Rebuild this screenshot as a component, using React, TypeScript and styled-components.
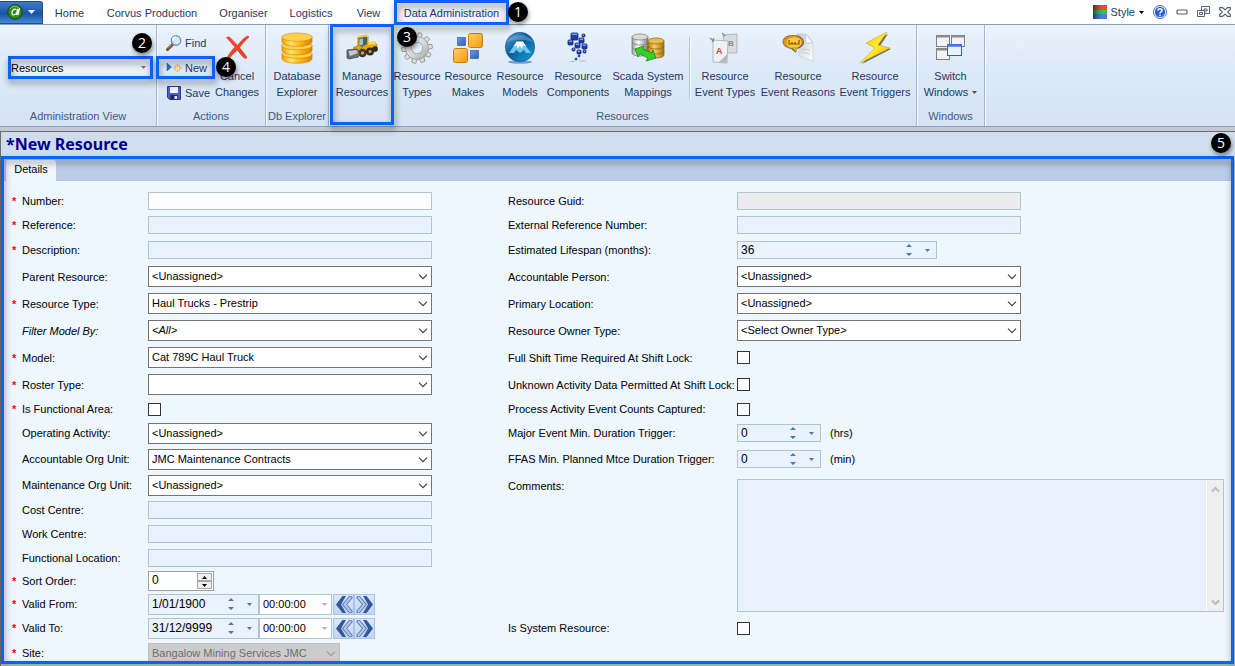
import React from 'react';
import styled, { createGlobalStyle, css } from 'styled-components';

const GlobalStyle = createGlobalStyle`
  *, *::before, *::after { box-sizing: border-box; }
  body { margin: 0; background: #c3c9d2; }
  body, button, input, select, textarea {
    font-family: "Liberation Sans", Arial, sans-serif;
    font-size: 11px;
  }
`;

const ink = '#1f3763';
const blue = '#0a62fb';

/* ---------- shared ---------- */

const Shell = styled.div`
  display: flex;
  flex-direction: column;
  height: 100vh;
  overflow: hidden;
`;

const Highlight = styled.span<{ $top?: number; $right?: number; $bottom?: number; $left?: number }>`
  position: absolute;
  z-index: 2;
  top: ${p => p.$top ?? 0}px;
  right: ${p => p.$right ?? 0}px;
  bottom: ${p => p.$bottom ?? 0}px;
  left: ${p => p.$left ?? 0}px;
  border: 3px solid ${blue};
  filter: drop-shadow(1px 4px 3px rgba(0, 0, 0, 0.45));
  pointer-events: none;
`;

const Badge = styled.span<{ $top: number; $right: number }>`
  position: absolute;
  z-index: 3;
  top: ${p => p.$top}px;
  right: ${p => p.$right}px;
  width: 20px;
  height: 20px;
  border-radius: 50%;
  background: #000;
  color: #fff;
  font: 14px/20px "Open Sans", sans-serif;
  text-align: center;
  box-shadow: 1px 3px 4px rgba(0, 0, 0, 0.4);
`;

/* ---------- title bar ---------- */

const TitleBar = styled.header`
  display: flex;
  align-items: center;
  flex: none;
  height: 25px;
  background: #fff;
  border-bottom: 1px solid #8aa0bd;
`;

const AppMenu = styled.button`
  display: flex;
  align-items: center;
  gap: 4px;
  width: 43px;
  height: 23px;
  padding: 0 0 0 7px;
  border: 1px solid #1d4b8f;
  border-left: 0;
  border-radius: 0 3px 0 0;
  background: linear-gradient(#3f7cc4, #1f58a8 50%, #1a4f9e 52%, #3f8ad8);
`;

const Tabs = styled.nav`
  display: flex;
  flex: 1;
  height: 24px;
`;

const RibbonTab = styled.button<{ $w: number; $active?: boolean }>`
  position: relative;
  width: ${p => p.$w}px;
  padding: 2px 0 0;
  border: 0;
  background: ${p => (p.$active ? '#f1f6fc' : 'none')};
  color: ${ink};
  white-space: nowrap;
`;

const WindowTools = styled.div`
  display: flex;
  align-items: center;
  padding-right: 4px;
  gap: 9px;
`;

const ToolButton = styled.button`
  display: flex;
  align-items: center;
  gap: 4px;
  padding: 0;
  border: 0;
  background: none;
  color: ${ink};
`;

/* ---------- ribbon ---------- */

const Ribbon = styled.div`
  display: flex;
  flex: none;
  height: 102px;
  border-bottom: 1px solid #8aa3c8;
  background: linear-gradient(#eaf3fd, #dce9f7 45%, #d7e3f2);
`;

const Group = styled.section<{ $w: number }>`
  display: flex;
  flex-direction: column;
  width: ${p => p.$w}px;
  border-right: 1px solid #a3b7d3;
  box-shadow: 1px 0 0 #f5f9fe;
`;

const GroupBody = styled.div<{ $pad?: number }>`
  display: flex;
  flex: none;
  height: 80px;
  padding: 0 ${p => p.$pad ?? 0}px;
`;

const GroupName = styled.h2`
  margin: 0;
  font-size: 11px;
  font-weight: 400;
  line-height: 22px;
  text-align: center;
  white-space: nowrap;
  color: #3c5a85;
`;

const BigButton = styled.button<{ $w: number }>`
  position: relative;
  display: flex;
  flex-direction: column;
  align-items: center;
  flex: none;
  width: ${p => p.$w}px;
  padding: 7px 0 0;
  border: 0;
  background: none;
  color: ${ink};
  line-height: 16px;
  white-space: nowrap;
`;

const BigIcon = styled.span`
  display: block;
  height: 32px;
  margin-bottom: 4px;
  svg { display: block; }
`;

const Caption = styled.span`
  display: flex;
  align-items: center;
  gap: 4px;
`;

const ViewPicker = styled.div`
  position: relative;
  width: 140px;
  height: 17px;
  margin: 34px 0 0 11px;
`;

const ViewSelect = styled.select`
  appearance: none;
  width: 100%;
  height: 100%;
  padding: 0;
  border: 0;
  background: #eaf0f8;
  color: #000;
`;

const PickerArrow = styled.svg`
  position: absolute;
  right: 5px;
  top: 7px;
  pointer-events: none;
`;

const SmallStack = styled.div`
  display: flex;
  flex-direction: column;
  width: 56px;
  padding-top: 5px;
`;

const SmallButton = styled.button`
  position: relative;
  display: flex;
  align-items: center;
  gap: 3px;
  height: 25px;
  padding: 0 0 0 5px;
  border: 0;
  background: none;
  color: ${ink};
`;

const Separator = styled.span`
  width: 1px;
  height: 62px;
  margin: 12px 3px 0;
  background: #b4c6de;
  box-shadow: 1px 0 0 #f5f9fe;
`;

/* ---------- workspace ---------- */

const Workspace = styled.main`
  display: flex;
  flex-direction: column;
  flex: 1;
  min-height: 0;
  margin-top: 4px;
  padding: 0 1px 2px 0;
  border-top: 1px solid #6d6d6d;
  border-left: 1px solid #6d6d6d;
`;

const PageTitle = styled.h1`
  flex: none;
  margin: 0 -1px 0 0;
  height: 24px;
  padding-left: 5px;
  background: #d0ddee;
  color: #00008b;
  font: bold 16px/24px "Noto Sans", "Open Sans", sans-serif;
`;

const DetailsPanel = styled.div`
  position: relative;
  display: flex;
  flex: 1;
  min-height: 0;
  padding: 3px;
  background: #eef6fe;
`;

const PanelClip = styled.div`
  flex: 1;
  min-width: 0;
  overflow: hidden;
`;

const TabStrip = styled.div`
  display: flex;
  height: 22px;
  padding: 1px 0 0 2px;
  background: #bbcde6;
  border-bottom: 1px solid #b3c7e0;
`;

const DetailsTab = styled.button`
  width: 50px;
  height: 21px;
  padding: 0 0 4px;
  border: 0;
  border-radius: 3px 3px 0 0;
  background: linear-gradient(#f7faff, #eef6fe);
  color: #000;
`;

const Form = styled.form`
  display: grid;
  grid-template-columns: minmax(430px, 496px) minmax(0, 1fr);
  padding: 8px 7px 0 8px;
`;

const Row = styled.div<{ $h: number }>`
  display: flex;
  align-items: center;
  height: ${p => p.$h}px;
`;

const Star = styled.span`
  width: 10px;
  color: #f00;
  font-weight: 700;
`;

const Label = styled.label<{ $wide?: boolean; $italic?: boolean }>`
  flex: none;
  width: ${p => (p.$wide ? 229 : 126)}px;
  font-style: ${p => (p.$italic ? 'italic' : 'normal')};
  white-space: nowrap;
  color: #000;
`;

const TextBox = styled.input<{ $tone?: 'white' | 'grey' }>`
  width: 284px;
  height: 18px;
  padding: 0 3px;
  border: 1px solid #afc6d1;
  background: ${p => (p.$tone === 'white' ? '#fdfdff' : p.$tone === 'grey' ? '#ececee' : '#e9f0fe')};
`;

const SelectWrap = styled.div<{ $w?: number }>`
  position: relative;
  width: ${p => p.$w ?? 284}px;
  height: 21px;
  svg { position: absolute; right: 4px; top: 8px; pointer-events: none; }
`;

const SelectBox = styled.select<{ $italic?: boolean }>`
  appearance: none;
  width: 100%;
  height: 21px;
  padding: 0 20px 1px 3px;
  border: 1px solid #747474;
  border-radius: 0;
  background: #fff;
  color: #000;
  font-style: ${p => (p.$italic ? 'italic' : 'normal')};
  &:disabled { background: #ccc; border-color: #bfbfbf; color: #6d6d6d; opacity: 1; }
`;

const CheckBox = styled.input`
  appearance: none;
  width: 13px;
  height: 13px;
  margin: 0;
  border: 1px solid #333;
  background: #fff;
`;

const field = css`
  display: flex;
  align-items: center;
  border: 1px solid #afc6d1;
  background: #e9f0fe;
`;

const Stepper = styled.div<{ $w: number; $tall?: boolean; $white?: boolean }>`
  ${field}
  width: ${p => p.$w}px;
  height: ${p => (p.$tall ? 21 : 18)}px;
  padding-right: ${p => (p.$white ? 2 : 0)}px;
  background: ${p => (p.$white ? '#fff' : '#e9f2fd')};
`;

const StepperInput = styled.input<{ $small?: boolean }>`
  flex: 1;
  min-width: 0;
  height: 16px;
  padding: 0 0 0 3px;
  border: 0;
  background: none;
  color: #000;
  font-size: ${p => (p.$small ? 11 : 12)}px;
`;

const StepButton = styled.button`
  display: flex;
  justify-content: center;
  width: 18px;
  padding: 0;
  border: 0;
  background: none;
`;

const TimeDrop = styled(StepButton)`
  width: 10px;
`;

const ClassicSpin = styled.div`
  display: flex;
  width: 66px;
  height: 20px;
  border: 1px solid #9aa0a6;
  background: #fff;
`;

const ClassicButtons = styled.div`
  display: flex;
  flex-direction: column;
  width: 16px;
  padding: 1px 1px 1px 0;
  button {
    display: flex;
    flex: 1;
    align-items: center;
    justify-content: center;
    padding: 0;
    border: 1px solid #a8a8a8;
    background: #efefef;
  }
`;

const JumpButtons = styled.div`
  display: flex;
  margin-left: 1px;
`;

const JumpButton = styled.button`
  display: flex;
  align-items: center;
  justify-content: center;
  width: 21px;
  height: 21px;
  padding: 0;
  border: 1px solid #a9c3e6;
  background: linear-gradient(#dbe8f8, #c0d5f0);
`;

const Unit = styled.span`
  margin-left: 9px;
`;

const CommentsRow = styled.div`
  display: flex;
  padding: 7px 0 4px;
  label { line-height: 14px; }
`;

const CommentsBox = styled.div`
  display: flex;
  flex: 1;
  min-width: 0;
  height: 133px;
  border: 1px solid #afc6d1;
  background: #e9f0fe;
  textarea {
    flex: 1;
    min-width: 0;
    padding: 2px;
    border: 0;
    background: none;
    resize: none;
    overflow: hidden;
  }
`;

const ScrollTrack = styled.div`
  display: flex;
  flex-direction: column;
  align-items: center;
  justify-content: space-between;
  width: 17px;
  padding: 6px 0 5px;
  border-left: 1px solid #fff;
  background: #efefef;
`;

/* ---------- small glyphs ---------- */

const Chevron = ({ color = '#444' }: { color?: string }) => (
  <svg width="10" height="6" viewBox="0 0 10 6"><path d="M1 .7l4 4 4-4" fill="none" stroke={color} strokeWidth="1.2" /></svg>
);
const ScrollArrow = ({ up }: { up?: boolean }) => (
  <svg width="9" height="7" viewBox="0 0 9 7"><path d={up ? 'M1 5.500L4.500 2 8 5.500' : 'M1 1.500L4.500 5 8 1.500'} fill="none" stroke="#bdbdbd" strokeWidth="2.200" /></svg>
);
const Down = ({ color = '#4a78b0' }: { color?: string }) => (
  <svg width="5" height="3" viewBox="0 0 5 3"><path d="M0 0h5L2.500 3z" fill={color} /></svg>
);
const UpDown = () => (
  <svg width="6" height="12" viewBox="0 0 6 12"><path d="M0 3h6L3 0zM0 9h6L3 12z" fill="#4a78b0" /></svg>
);
const Double = ({ right }: { right?: boolean }) => (
  <svg width="18" height="17" viewBox="0 0 18 17">
    <g transform={right ? 'matrix(-1 0 0 1 18 0)' : undefined} fill="none">
      <path d="M15.500 1.500L9.500 8.500l6 7" stroke="#5d7db5" strokeWidth="4" strokeLinecap="round" />
      <path d="M15.500 1.500L9.500 8.500l6 7" stroke="#b4c9e8" strokeWidth="2" strokeLinecap="round" />
      <path d="M7.500 0H11L6 8.500 11 17H7.500L1 8.500z" fill="#34589b" />
    </g>
  </svg>
);

/* ---------- icons ---------- */

const Logo = () => (
  <svg width="16" height="16" viewBox="0 0 16 16">
    <circle cx="8" cy="8" r="7.500" fill="#2f8a1f" /><circle cx="8" cy="8" r="7.200" fill="none" stroke="#12430c" />
    <path d="M3 5a5.500 5.500 0 0 1 9-1" stroke="#8fd06a" fill="none" />
    <path d="M9.500 5.500C7 4 4.500 7 5 9.500s3 1.500 4.500-.500L11 5l-1.500 6M12.500 4L11 11" stroke="#fff" strokeWidth="1.200" fill="none" />
  </svg>
);
const StyleIcon = () => (
  <svg width="14" height="14" viewBox="0 0 14 14">
    <defs><linearGradient id="sh"><stop stopColor="#000" stopOpacity=".5" /><stop offset="1" stopColor="#fff" stopOpacity=".1" /></linearGradient></defs>
    <path fill="#e63323" d="M0 0h14v5H0z" /><path fill="#1ac023" d="M0 5h14v4H0z" /><path fill="#2d6df0" d="M0 9h14v5H0z" /><path fill="url(#sh)" d="M0 0h14v14H0z" />
  </svg>
);
const HelpIcon = () => (
  <svg width="14" height="14" viewBox="0 0 14 14">
    <circle cx="7" cy="7" r="6.500" fill="#fff" stroke="#3f6fcb" /><circle cx="7" cy="7" r="5.200" fill="#2a62d6" />
    <path d="M5 5.500C5 3.200 9 3.200 9 5.400 9 6.800 7 6.700 7 8.500M7 9.800v1.400" stroke="#fff" strokeWidth="1.500" fill="none" />
  </svg>
);
const MinIcon = () => <svg width="12" height="6" viewBox="0 0 12 6"><rect x="1" y="1" width="10" height="4" rx="1" fill="#fff" stroke="#54616f" strokeWidth="1.200" /></svg>;
const RestoreIcon = () => (
  <svg width="13" height="12" viewBox="0 0 13 12" fill="#fff" stroke="#54616f">
    <path d="M4.500.5h8v7h-8z" /><path d="M7 3h3v2H7z" /><path d="M.5 4.500h7v6h-7z" /><path d="M2.500 6.500h3v2h-3z" />
  </svg>
);
const CloseIcon = () => (
  <svg width="12" height="10" viewBox="0 0 12 10"><path d="M.6.6h3L6 3 8.400.6h3v1.800L8.500 5l2.900 2.600v1.800h-3L6 7 3.600 9.400h-3V7.600L3.500 5 .6 2.400z" fill="#fff" stroke="#54616f" strokeWidth="1.100" /></svg>
);
const FindIcon = () => (
  <svg width="16" height="16" viewBox="0 0 16 16">
    <path d="M6.500 9.500L1.500 14.500" stroke="#6b4a2e" strokeWidth="3" strokeLinecap="round" /><path d="M6 9.500L2 13.500" stroke="#d9a066" />
    <circle cx="10" cy="5.500" r="4.700" fill="#cfeafc" stroke="#7b8ea6" strokeWidth="1.400" /><path d="M7 5a3 3 0 0 1 3-3" stroke="#fff" strokeWidth="1.500" fill="none" />
  </svg>
);
const NewIcon = () => (
  <svg width="16" height="16" viewBox="0 0 16 16">
    <path d="M1 3l4.500 4L1 11z" fill="#2f6bd0" stroke="#2350a0" strokeWidth=".5" />
    <path d="M11.500 4v8M7.500 8h8M9 5.500l5 5M14 5.500l-5 5" stroke="#f0b429" strokeWidth="1.400" strokeDasharray="2 1" /><circle cx="11.500" cy="8" r="1.800" fill="#ffe57a" />
  </svg>
);
const SaveIcon = () => (
  <svg width="16" height="16" viewBox="0 0 16 16">
    <path d="M1.500 1.500h13v13h-11l-2-2z" fill="#4a5fc6" stroke="#2b3a8c" /><path d="M4 2h8v6H4z" fill="#eef2fb" /><path d="M4.500 10h7v4.500h-7z" fill="#20264f" /><path d="M8.500 11H11v3H8.500z" fill="#e6e9f5" />
  </svg>
);
const CancelIcon = () => (
  <svg width="32" height="32" viewBox="0 0 32 32"><path d="M5.500 5.500C8 4 9 5 16.500 13.500 21 8 24 5 27 4l1 1c-3 2.500-6 6-9.500 10.500 3 4 6 7 7.500 10l-2 1c-3-2-5-5-7.500-8.500C12 21.500 9 25.500 7 28l-2-1c2.500-4 5.500-8.500 9-12C11 11.500 8 8.500 5.500 5.500z" fill="#ee4527" stroke="#d42f16" strokeWidth=".6" /></svg>
);
const DbIcon = () => (
  <svg width="32" height="32" viewBox="0 0 34 34">
    <defs><linearGradient id="db"><stop stopColor="#f39a05" /><stop offset=".3" stopColor="#ffe66b" /><stop offset=".6" stopColor="#fbb710" /><stop offset="1" stopColor="#e07f00" /></linearGradient></defs>
    {[23, 14, 5].map(y => (
      <g key={y}><path d={`M1 ${y}v5c0 7 32 7 32 0v-5z`} fill="url(#db)" stroke="#c87500" strokeWidth=".6" /><ellipse cx="17" cy={y + 0.5} rx="16" ry="4.400" fill="#ffd34f" stroke="#e08a05" strokeWidth=".7" /></g>
    ))}
  </svg>
);
const LoaderIcon = () => (
  <svg width="32" height="32" viewBox="0 0 32 32">
    <path d="M16 12l13-2 2 3v6l-8 2-8-2z" fill="#eba911" stroke="#8f6407" strokeWidth=".6" /><path d="M21 10l8-1 1 3-9 1z" fill="#ffd75a" />
    <path d="M12 5.500l8.500-1.500 1.500 1-.5 8-9.500 3.500z" fill="#49606c" stroke="#e0a20e" strokeWidth="1.400" /><path d="M13.500 7l3.500-.5v6l-4 1.500z" fill="#9fc3d6" /><path d="M12 5l8-1.600 2 1.600" stroke="#ffcf3f" strokeWidth="1.500" fill="none" />
    <circle cx="29" cy="17" r="2.800" fill="#2e2c29" /><circle cx="24" cy="19.500" r="4" fill="#2e2c29" /><circle cx="24" cy="19.500" r="1.500" fill="#d8a51d" />
    <circle cx="16.500" cy="21" r="4.200" fill="#383633" /><circle cx="16.500" cy="21" r="1.700" fill="#d8a51d" />
    <path d="M7 16l6-3 4 2-5 4z" fill="#e5a512" stroke="#8f6407" strokeWidth=".6" />
    <path d="M1 18l10-1 3 5-2 3-9 2-2-1z" fill="#697078" stroke="#3d434a" strokeWidth=".8" /><path d="M2.500 19l8-1 1.500 3-8 3z" fill="#c3c9ce" />
  </svg>
);
const GearIcon = () => (
  <svg width="32" height="32" viewBox="0 0 32 32">
    <defs><linearGradient id="gr" x2="1" y2="1"><stop stopColor="#fff" /><stop offset=".6" stopColor="#d4d4d4" /><stop offset="1" stopColor="#b0b0b0" /></linearGradient></defs>
    {[0, 36, 72, 108, 144, 180, 216, 252, 288, 324].map(a => (
      <path key={a} d="M13.200 6l1-5.300h3.600l1 5.300z" transform={`rotate(${a + 12} 16 16)`} fill="#dedede" stroke="#8f8f8f" strokeWidth=".8" />
    ))}
    <circle cx="16" cy="16" r="8.500" fill="none" stroke="#8f8f8f" strokeWidth="6.200" /><circle cx="16" cy="16" r="8.500" fill="none" stroke="url(#gr)" strokeWidth="5.200" />
  </svg>
);
const MakesIcon = () => (
  <svg width="32" height="32" viewBox="0 0 32 32">
    <defs><linearGradient id="mo" y2="1"><stop stopColor="#ffd061" /><stop offset="1" stopColor="#f09a11" /></linearGradient><linearGradient id="mb" y2="1"><stop stopColor="#6d9be0" /><stop offset="1" stopColor="#2c5eb8" /></linearGradient></defs>
    <rect x="16.500" y="1.500" width="14" height="14" rx="2" fill="url(#mo)" stroke="#cc7d08" /><rect x="1.500" y="16.500" width="14" height="14" rx="2" fill="url(#mo)" stroke="#cc7d08" />
    <rect x="5.500" y="5.500" width="8" height="8" fill="url(#mb)" stroke="#2550a0" strokeWidth=".6" /><rect x="18.500" y="18.500" width="8" height="8" fill="url(#mb)" stroke="#2550a0" strokeWidth=".6" />
  </svg>
);
const ModelsIcon = () => (
  <svg width="32" height="32" viewBox="0 0 32 32">
    <defs><linearGradient id="ml" y2="1"><stop stopColor="#5aa6d6" /><stop offset=".45" stopColor="#0d5a9c" /><stop offset="1" stopColor="#1ba4de" /></linearGradient></defs>
    <ellipse cx="16" cy="30" rx="12" ry="1.800" fill="#4c7fb2" opacity=".7" /><circle cx="16" cy="15" r="14.700" fill="url(#ml)" stroke="#0b4f8a" strokeWidth=".6" />
    <path d="M3 10C7 1 25 1 29 10c-7-3-19-3-26 0z" fill="#fff" opacity=".22" />
    <path d="M12 10h7l8 11h-5l-2-3-4 3-4-3-2 3H5z" fill="#6cc7ea" /><path d="M12.500 9.500h6.500l3 5-3-1-1 3-2-2.500-3 2.500v-3l-3 1z" fill="#fff" />
  </svg>
);
const ComponentsIcon = () => (
  <svg width="32" height="32" viewBox="0 0 32 32">
    {[[5, 2, 7], [16, 3, 3], [13, 7, 5], [2, 9, 5], [9, 12, 5], [16, 13, 5], [6, 17, 3], [11, 19, 4], [17, 19, 3], [12, 24, 2], [9, 27, 2]].map(([x, y, s]) => (
      <g key={`${x}-${y}`} transform="translate(4 -1)"><rect x={x} y={y} width={s} height={s} rx="1" fill="#1c3fae" stroke="#0e2272" strokeWidth=".8" /><path d={`M${x + 0.700} ${y + 1.200}h${s - 1.500}`} stroke="#93b4ff" strokeWidth="1.200" /></g>
    ))}
    <path d="M8 29.500h5M17 29h7" stroke="#b5bdd0" strokeWidth="1.200" />
  </svg>
);
const ScadaIcon = () => (
  <svg width="34" height="32" viewBox="0 0 34 32">
    <defs><linearGradient id="sg"><stop stopColor="#9c9c9c" /><stop offset=".4" stopColor="#fff" /><stop offset="1" stopColor="#7d7d7d" /></linearGradient><linearGradient id="sy"><stop stopColor="#b77c0e" /><stop offset=".4" stopColor="#f6cf6c" /><stop offset="1" stopColor="#a86e08" /></linearGradient></defs>
    <path d="M1 5v16c0 4 16 4 16 0V5z" fill="url(#sg)" stroke="#777" strokeWidth=".7" /><ellipse cx="9" cy="5" rx="8" ry="3" fill="#dcdcdc" stroke="#777" strokeWidth=".7" /><path d="M1 10c0 4 16 4 16 0M1 15c0 4 16 4 16 0" stroke="#777" fill="none" strokeWidth=".7" />
    <path d="M17 9v14c0 4 16 4 16 0V9z" fill="url(#sy)" stroke="#8f6209" strokeWidth=".7" /><ellipse cx="25" cy="9" rx="8" ry="3" fill="#e8bc50" stroke="#8f6209" strokeWidth=".7" /><path d="M17 14c0 4 16 4 16 0M17 19c0 4 16 4 16 0" stroke="#8f6209" fill="none" strokeWidth=".7" />
    <path d="M4 17l9-3-1 3 9 4 1-3 3 8-10 3 2-3-8-4-2 3z" fill="#37cf27" stroke="#158a0d" strokeWidth=".8" />
  </svg>
);
const EventTypesIcon = () => (
  <svg width="32" height="32" viewBox="0 0 32 32">
    <path d="M14 3l14-1v19H17z" fill="#d9dde0" stroke="#9aa0a6" strokeWidth=".7" /><text x="19" y="14" fontSize="8" fontWeight="700" fill="#4caf78" fontFamily="Liberation Sans, sans-serif">B</text>
    <path d="M4 8l15 1-1 22-14-1z" fill="#f0f1f3" stroke="#9aa0a6" strokeWidth=".7" /><path d="M1 6l4 3M3 10l2-4M13 1l3 3" stroke="#888" strokeWidth="1.200" /><path d="M18 22v9l-8-1z" fill="#b5babf" />
    <text x="7" y="22" fontSize="9" fontWeight="700" fill="#ee3344" fontFamily="Liberation Sans, sans-serif">A</text>
  </svg>
);
const EventReasonsIcon = () => (
  <svg width="32" height="32" viewBox="0 0 32 32">
    <defs><linearGradient id="pg" x2="1" y2="1"><stop stopColor="#c4c9cd" /><stop offset="1" stopColor="#fff" /></linearGradient></defs>
    <path d="M15 2l9 0 7 8v19l-14-5z" fill="url(#pg)" stroke="#c3c8cc" strokeWidth=".6" /><path d="M24 2l-1 9 8 0z" fill="#f7f8f9" stroke="#b3b8bd" strokeWidth=".6" /><path d="M19 17l9 1M19 20l9 2" stroke="#c9cdd1" />
    <path d="M11 3c14 0 14 12 4 14l-1 4-5-4C-3 15-2 3 11 3z" fill="#6f6f6f" /><ellipse cx="11" cy="10" rx="9.500" ry="6.300" fill="#e8950b" /><ellipse cx="12" cy="10.500" rx="7.500" ry="5.200" fill="#ffc93d" />
    <path d="M10 15h5l-1 5z" fill="#f3a713" /><path d="M7 8v4h10V8M10 12v-2M13 12v-2" stroke="#7a5200" strokeWidth="1.200" fill="none" />
  </svg>
);
const BoltIcon = () => (
  <svg width="32" height="32" viewBox="0 0 32 32">
    <defs><linearGradient id="bo" y2="1"><stop stopColor="#f2b70b" /><stop offset=".5" stopColor="#ffee2e" /><stop offset="1" stopColor="#e9a308" /></linearGradient></defs>
    <path d="M29 2L9 12l8 4L3 32l29-15-11-3z" fill="#444" opacity=".75" /><path d="M28 0L7 11l9 5L1 31l30-15-12-3z" fill="url(#bo)" stroke="#d29208" strokeWidth=".5" />
  </svg>
);
const WindowsIcon = () => (
  <svg width="32" height="32" viewBox="0 0 32 32">
    {[[1.5, 3.5], [16.5, 3.5], [1.5, 16.5]].map(([x, y]) => (
      <g key={`${x}-${y}`}><rect x={x} y={y} width="13" height="11" fill="#f3f3f3" stroke="#7e7e7e" /><path d={`M${x} ${y + 1}h13`} stroke="#8c8c8c" strokeWidth="2" /></g>
    ))}
    <rect x="12.500" y="12.500" width="14" height="11" fill="#eaf2ff" stroke="#3a5db0" /><path d="M12.500 13.500h14" stroke="#3f78e6" strokeWidth="2.500" />
  </svg>
);

/* ---------- form pieces ---------- */

type LabelProps = { id: string; text: string; req?: boolean; wide?: boolean; italic?: boolean };

const FieldLabel = ({ id, text, req, wide, italic }: LabelProps) => (
  <>
    {!wide && <Star>{req ? '*' : ''}</Star>}
    <Label htmlFor={id} $wide={wide} $italic={italic}>{text}</Label>
  </>
);

const TextRow = ({ h = 24, tone, ...l }: LabelProps & { h?: number; tone?: 'white' | 'grey' }) => (
  <Row $h={h}><FieldLabel {...l} /><TextBox id={l.id} $tone={tone} readOnly={tone === 'grey'} /></Row>
);

const SelectRow = ({ h = 27, value, w, disabled, ...l }: LabelProps & { h?: number; value: string; w?: number; disabled?: boolean }) => (
  <Row $h={h}>
    <FieldLabel {...l} />
    <SelectWrap $w={w}>
      <SelectBox id={l.id} $italic={l.italic} disabled={disabled}><option>{value}</option></SelectBox>
      <Chevron color={disabled ? '#999' : '#444'} />
    </SelectWrap>
  </Row>
);

const CheckRow = ({ h, ...l }: LabelProps & { h: number }) => (
  <Row $h={h}><FieldLabel {...l} /><CheckBox id={l.id} type="checkbox" /></Row>
);

const StepRow = ({ value, w, unit, ...l }: LabelProps & { value: string; w: number; unit?: string }) => (
  <Row $h={26}>
    <FieldLabel {...l} />
    <Stepper $w={w}>
      <StepperInput id={l.id} defaultValue={value} />
      <StepButton type="button" aria-label="Step"><UpDown /></StepButton>
      <StepButton type="button" aria-label="Open"><Down /></StepButton>
    </Stepper>
    {unit && <Unit>{unit}</Unit>}
  </Row>
);

const DateRow = ({ value, ...l }: LabelProps & { value: string }) => (
  <Row $h={24}>
    <FieldLabel {...l} />
    <Stepper $w={111} $tall>
      <StepperInput id={l.id} defaultValue={value} />
      <StepButton type="button" aria-label="Step"><UpDown /></StepButton>
      <StepButton type="button" aria-label="Open calendar"><Down /></StepButton>
    </Stepper>
    <Stepper $w={73} $tall $white>
      <StepperInput $small aria-label="Time" defaultValue="00:00:00" />
      <TimeDrop type="button" aria-label="Open time"><Down color="#aaa" /></TimeDrop>
    </Stepper>
    <JumpButtons>
      <JumpButton type="button" aria-label="Back"><Double /></JumpButton>
      <JumpButton type="button" aria-label="Forward"><Double right /></JumpButton>
    </JumpButtons>
  </Row>
);

const Big = ({ icon, a, b, w, children }: { icon: React.ReactNode; a: string; b: React.ReactNode; w: number; children?: React.ReactNode }) => (
  <BigButton type="button" $w={w}><BigIcon>{icon}</BigIcon><Caption>{a}</Caption><Caption>{b}</Caption>{children}</BigButton>
);

export default function App() {
  return (
    <Shell>
      <GlobalStyle />
      <TitleBar>
        <AppMenu type="button" aria-label="Application menu"><Logo /><svg width="9" height="5" viewBox="0 0 9 5"><path d="M1 0h7L4.500 4z" fill="#fff" /></svg></AppMenu>
        <Tabs>
          <RibbonTab $w={53}>Home</RibbonTab>
          <RibbonTab $w={112}>Corvus Production</RibbonTab>
          <RibbonTab $w={71}>Organiser</RibbonTab>
          <RibbonTab $w={64}>Logistics</RibbonTab>
          <RibbonTab $w={51}>View</RibbonTab>
          <RibbonTab $w={115} $active>
            Data Administration
            <Highlight $bottom={-1} />
            <Badge $top={2} $right={-19}>1</Badge>
          </RibbonTab>
        </Tabs>
        <WindowTools>
          <ToolButton type="button"><StyleIcon />Style <Down color="#000" /></ToolButton>
          <ToolButton type="button" aria-label="Help"><HelpIcon /></ToolButton>
          <ToolButton type="button" aria-label="Minimise"><MinIcon /></ToolButton>
          <ToolButton type="button" aria-label="Restore"><RestoreIcon /></ToolButton>
          <ToolButton type="button" aria-label="Close"><CloseIcon /></ToolButton>
        </WindowTools>
      </TitleBar>

      <Ribbon>
        <Group $w={157}>
          <GroupBody>
            <ViewPicker>
              <ViewSelect aria-label="Administration view"><option>Resources</option></ViewSelect>
              <PickerArrow width="5" height="3" viewBox="0 0 5 3"><path d="M0 0h5L2.500 3z" fill="#6b7a8f" /></PickerArrow>
              <Highlight $top={-3} $right={-2} $bottom={-3} $left={-3} />
              <Badge $top={-26} $right={-1}>2</Badge>
            </ViewPicker>
          </GroupBody>
          <GroupName>Administration View</GroupName>
        </Group>
        <Group $w={109}>
          <GroupBody $pad={4}>
            <SmallStack>
              <SmallButton type="button"><FindIcon />Find</SmallButton>
              <SmallButton type="button">
                <NewIcon />New
                <Highlight $top={1} $right={2} $bottom={1} $left={-5} />
                <Badge $top={2} $right={-19}>4</Badge>
              </SmallButton>
              <SmallButton type="button"><SaveIcon />Save</SmallButton>
            </SmallStack>
            <Big icon={<CancelIcon />} a="Cancel" b="Changes" w={40} />
          </GroupBody>
          <GroupName>Actions</GroupName>
        </Group>
        <Group $w={63}>
          <GroupBody><Big icon={<DbIcon />} a="Database" b="Explorer" w={62} /></GroupBody>
          <GroupName>Db Explorer</GroupName>
        </Group>
        <Group $w={588}>
          <GroupBody $pad={3}>
            <Big icon={<LoaderIcon />} a="Manage" b="Resources" w={60}>
              <Highlight $top={-1} $right={-2} $bottom={-20} $left={-2} />
              <Badge $top={2} $right={-25}>3</Badge>
            </Big>
            <Big icon={<GearIcon />} a="Resource" b="Types" w={50} />
            <Big icon={<MakesIcon />} a="Resource" b="Makes" w={52} />
            <Big icon={<ModelsIcon />} a="Resource" b="Models" w={52} />
            <Big icon={<ComponentsIcon />} a="Resource" b="Components" w={64} />
            <Big icon={<ScadaIcon />} a="Scada System" b="Mappings" w={76} />
            <Separator />
            <Big icon={<EventTypesIcon />} a="Resource" b="Event Types" w={64} />
            <Big icon={<EventReasonsIcon />} a="Resource" b="Event Reasons" w={82} />
            <Big icon={<BoltIcon />} a="Resource" b="Event Triggers" w={72} />
          </GroupBody>
          <GroupName>Resources</GroupName>
        </Group>
        <Group $w={68}>
          <GroupBody><Big icon={<WindowsIcon />} a="Switch" b={<>Windows <Down color="#555" /></>} w={67} /></GroupBody>
          <GroupName>Windows</GroupName>
        </Group>
      </Ribbon>

      <Workspace>
        <PageTitle>*New Resource</PageTitle>
        <DetailsPanel>
          <Highlight />
          <Badge $top={-23} $right={3}>5</Badge>
          <PanelClip>
            <TabStrip><DetailsTab type="button">Details</DetailsTab></TabStrip>
            <Form>
              <div>
                <TextRow id="number" text="Number:" req tone="white" />
                <TextRow id="reference" text="Reference:" req />
                <TextRow id="description" text="Description:" req h={26} />
                <SelectRow id="parent" text="Parent Resource:" value="<Unassigned>" />
                <SelectRow id="rtype" text="Resource Type:" req value="Haul Trucks - Prestrip" />
                <SelectRow id="filter" text="Filter Model By:" italic value="<All>" />
                <SelectRow id="model" text="Model:" req value="Cat 789C Haul Truck" />
                <SelectRow id="roster" text="Roster Type:" req value="" />
                <CheckRow id="functional" text="Is Functional Area:" req h={22} />
                <SelectRow id="activity" text="Operating Activity:" value="<Unassigned>" h={26} />
                <SelectRow id="accorg" text="Accountable Org Unit:" value="JMC Maintenance Contracts" h={26} />
                <SelectRow id="maintorg" text="Maintenance Org Unit:" value="<Unassigned>" h={26} />
                <TextRow id="cost" text="Cost Centre:" />
                <TextRow id="work" text="Work Centre:" />
                <TextRow id="floc" text="Functional Location:" />
                <Row $h={22}>
                  <FieldLabel id="sort" text="Sort Order:" req />
                  <ClassicSpin>
                    <StepperInput id="sort" defaultValue="0" />
                    <ClassicButtons>
                      <button type="button" aria-label="Increase"><svg width="5" height="3" viewBox="0 0 5 3"><path d="M0 3h5L2.500 0z" /></svg></button>
                      <button type="button" aria-label="Decrease"><Down color="#000" /></button>
                    </ClassicButtons>
                  </ClassicSpin>
                </Row>
                <DateRow id="from" text="Valid From:" req value="1/01/1900" />
                <DateRow id="to" text="Valid To:" req value="31/12/9999" />
                <SelectRow id="site" text="Site:" req value="Bangalow Mining Services JMC" w={192} disabled h={26} />
              </div>
              <div>
                <TextRow id="guid" text="Resource Guid:" wide tone="grey" />
                <TextRow id="extref" text="External Reference Number:" wide />
                <StepRow id="life" text="Estimated Lifespan (months):" wide value="36" w={200} />
                <SelectRow id="person" text="Accountable Person:" wide value="<Unassigned>" />
                <SelectRow id="location" text="Primary Location:" wide value="<Unassigned>" />
                <SelectRow id="owner" text="Resource Owner Type:" wide value="<Select Owner Type>" />
                <CheckRow id="fullshift" text="Full Shift Time Required At Shift Lock:" wide h={27} />
                <CheckRow id="unknown" text="Unknown Activity Data Permitted At Shift Lock:" wide h={27} />
                <CheckRow id="process" text="Process Activity Event Counts Captured:" wide h={22} />
                <StepRow id="major" text="Major Event Min. Duration Trigger:" wide value="0" w={84} unit="(hrs)" />
                <StepRow id="ffas" text="FFAS Min. Planned Mtce Duration Trigger:" wide value="0" w={84} unit="(min)" />
                <CommentsRow>
                  <FieldLabel id="comments" text="Comments:" wide />
                  <CommentsBox>
                    <textarea id="comments" />
                    <ScrollTrack><ScrollArrow up /><ScrollArrow /></ScrollTrack>
                  </CommentsBox>
                </CommentsRow>
                <CheckRow id="system" text="Is System Resource:" wide h={24} />
              </div>
            </Form>
          </PanelClip>
        </DetailsPanel>
      </Workspace>
    </Shell>
  );
}
